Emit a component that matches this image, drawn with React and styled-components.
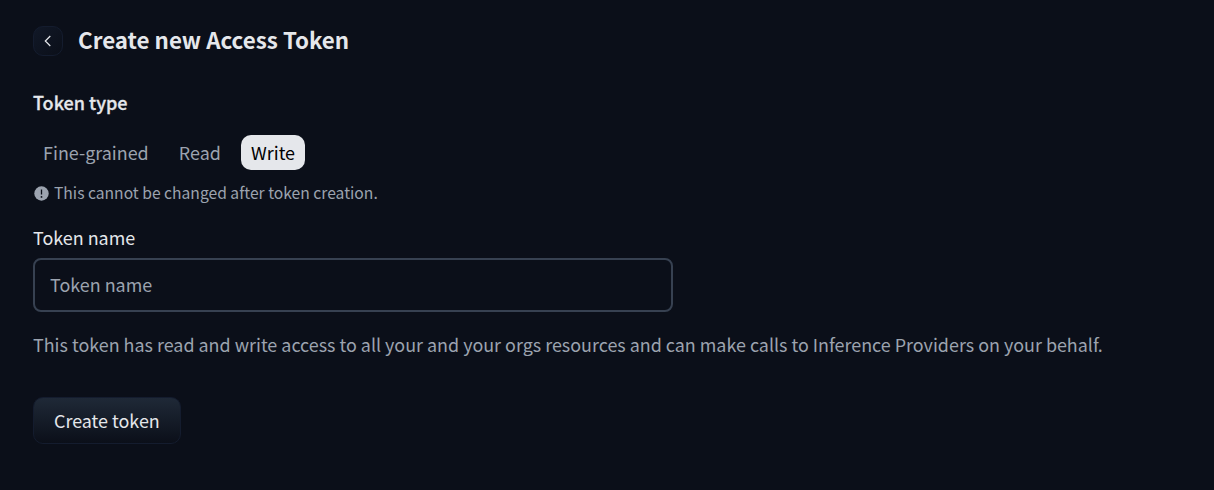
import React, { useState } from "react";
import styled, { createGlobalStyle } from "styled-components";

const palette = {
  page: "#0b0f19",
  white: "#e5e7eb",
  black: "#000",
  gray: "#9ca3af",
  border: "#374151",
  edge: "#141c2e",
};

const GlobalStyle = createGlobalStyle`
  * {
    box-sizing: border-box;
  }

  body {
    margin: 0;
    background: ${palette.page};
    color: ${palette.white};
    font-family: "Noto Sans CJK JP", "Noto Sans CJK SC", sans-serif;
    font-size: 17.91px;
    line-height: 30px;
  }

  button,
  input {
    font: inherit;
  }
`;

const Page = styled.form`
  display: flex;
  flex-direction: column;
  align-items: flex-start;
  min-height: 490px;
  padding: 26px 33px 0;
`;

const Header = styled.header`
  display: flex;
  align-items: center;
  gap: 15px;
  height: 30px;
  margin-bottom: 31px;
`;

const BackButton = styled.button`
  display: flex;
  align-items: center;
  justify-content: center;
  width: 30px;
  height: 30px;
  padding: 0;
  border: 1px solid ${palette.edge};
  border-radius: 10px;
  background: linear-gradient(to bottom right, #111827, ${palette.page});
  color: ${palette.white};
`;

const Title = styled.h1`
  margin: 0 0 4px;
  font-size: 22.35px;
  font-weight: 700;
`;

const SectionTitle = styled.h2`
  margin: 0 0 18px;
  font-size: 18px;
  font-weight: 500;
  -webkit-text-stroke: 0.3px;
`;

const Types = styled.div`
  display: flex;
  gap: 10px;
  height: 35px;
`;

const TypeOption = styled.button`
  height: 35px;
  padding: 0 10.1px;
  border: 0;
  border-radius: 10px;
  background: ${({ $active }) => ($active ? palette.white : "transparent")};
  color: ${({ $active }) => ($active ? palette.black : palette.gray)};
  line-height: 35px;
`;

const Notice = styled.p`
  display: flex;
  align-items: center;
  gap: 4.7px;
  margin: 11px 0 17px;
  padding-left: 1.3px;
  color: ${palette.gray};
  font-size: 15.65px;
  line-height: 24px;
`;

const Label = styled.label`
  margin-bottom: 6px;
`;

const Input = styled.input`
  width: 640px;
  height: 54px;
  padding: 0 15px 2px;
  border: 2px solid ${palette.border};
  border-radius: 8px;
  outline: none;
  background: transparent;
  color: ${palette.white};

  &::placeholder {
    color: ${palette.gray};
    opacity: 1;
  }
`;

const Description = styled.p`
  margin: 17px 0 38px;
  color: ${palette.gray};
  white-space: nowrap;
`;

const SubmitButton = styled.button`
  height: 47px;
  padding: 0 20px 2px;
  border: 1px solid ${palette.edge};
  border-radius: 10px;
  background: linear-gradient(to bottom, #1f2937, ${palette.page});
  color: ${palette.white};
`;

const BackIcon = () => (
  <svg width="8" height="12" viewBox="0 0 8 12" fill="none">
    <path d="M6.3 1 1.3 6l5 5" stroke="currentColor" strokeWidth="1.2" />
  </svg>
);

const NoticeIcon = () => (
  <svg width="15" height="15" viewBox="0 0 15 15">
    <circle cx="7.5" cy="7.5" r="7.2" fill="currentColor" />
    <path d="M7.5 3.5v5" stroke={palette.page} strokeWidth="1.3" />
    <circle cx="7.5" cy="10.9" r="0.9" fill={palette.page} />
  </svg>
);

const types = ["Fine-grained", "Read", "Write"];

const App = () => {
  const [type, setType] = useState("Write");

  return (
    <>
      <GlobalStyle />
      <Page onSubmit={(e) => e.preventDefault()}>
        <Header>
          <BackButton type="button" aria-label="Back">
            <BackIcon />
          </BackButton>
          <Title>Create new Access Token</Title>
        </Header>
        <SectionTitle>Token type</SectionTitle>
        <Types>
          {types.map((name) => (
            <TypeOption
              key={name}
              type="button"
              $active={name === type}
              onClick={() => setType(name)}
            >
              {name}
            </TypeOption>
          ))}
        </Types>
        <Notice>
          <NoticeIcon />
          This cannot be changed after token creation.
        </Notice>
        <Label htmlFor="token-name">Token name</Label>
        <Input id="token-name" placeholder="Token name" />
        <Description>
          This token has read and write access to all your and your orgs
          resources and can make calls to Inference Providers on your behalf.
        </Description>
        <SubmitButton>Create token</SubmitButton>
      </Page>
    </>
  );
};

export default App;
